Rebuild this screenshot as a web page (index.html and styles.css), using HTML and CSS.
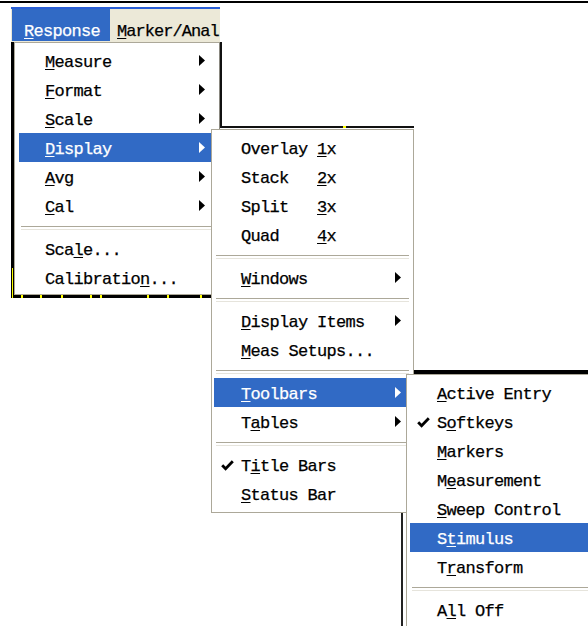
FILE: index.html
```html
<!DOCTYPE html>
<html>
<head>
<meta charset="utf-8">
<link rel="stylesheet" href="styles.css">
</head>
<body>
<div class="screen">
  <div class="topline"></div>
  <div class="titlestrip"></div>
  <div class="menubar">
    <div class="mb-item active"><span class="label"><u>R</u>esponse</span></div>
    <div class="mb-item tight"><span class="label"><u>M</u>arker/Anal</span></div>
  </div>

  <div class="bgwin w1">
    <i class="tick vt"></i>
    <i class="tick b1"></i><i class="tick b2"></i><i class="tick b3"></i><i class="tick b4"></i><i class="tick b5"></i><i class="tick b6"></i><i class="tick b7"></i><i class="tick b8"></i>
  </div>
  <div class="bgwin w2"><i class="tick c1"></i></div>
  <div class="bgwin w3"></div>
  <div class="bgwin w4"></div>

  <div class="menu m1">
    <div class="item"><span class="gut"></span><span class="label"><u>M</u>easure</span><svg class="arr" width="6" height="11" viewBox="0 0 6 11"><path d="M0 0L6 5.5L0 11Z"/></svg></div>
    <div class="item"><span class="gut"></span><span class="label"><u>F</u>ormat</span><svg class="arr" width="6" height="11" viewBox="0 0 6 11"><path d="M0 0L6 5.5L0 11Z"/></svg></div>
    <div class="item"><span class="gut"></span><span class="label"><u>S</u>cale</span><svg class="arr" width="6" height="11" viewBox="0 0 6 11"><path d="M0 0L6 5.5L0 11Z"/></svg></div>
    <div class="item hl"><span class="gut"></span><span class="label"><u>D</u>isplay</span><svg class="arr" width="6" height="11" viewBox="0 0 6 11"><path d="M0 0L6 5.5L0 11Z"/></svg></div>
    <div class="item"><span class="gut"></span><span class="label"><u>A</u>vg</span><svg class="arr" width="6" height="11" viewBox="0 0 6 11"><path d="M0 0L6 5.5L0 11Z"/></svg></div>
    <div class="item"><span class="gut"></span><span class="label"><u>C</u>al</span><svg class="arr" width="6" height="11" viewBox="0 0 6 11"><path d="M0 0L6 5.5L0 11Z"/></svg></div>
    <div class="sep"></div>
    <div class="item"><span class="gut"></span><span class="label">Sca<u>l</u>e...</span></div>
    <div class="item"><span class="gut"></span><span class="label">Calibratio<u>n</u>...</span></div>
  </div>

  <div class="menu m2">
    <div class="item"><span class="gut"></span><span class="label">Overlay <u>1</u>x</span></div>
    <div class="item"><span class="gut"></span><span class="label">Stack   <u>2</u>x</span></div>
    <div class="item"><span class="gut"></span><span class="label">Split   <u>3</u>x</span></div>
    <div class="item"><span class="gut"></span><span class="label">Quad    <u>4</u>x</span></div>
    <div class="sep"></div>
    <div class="item"><span class="gut"></span><span class="label"><u>W</u>indows</span><svg class="arr" width="6" height="11" viewBox="0 0 6 11"><path d="M0 0L6 5.5L0 11Z"/></svg></div>
    <div class="sep"></div>
    <div class="item"><span class="gut"></span><span class="label"><u>D</u>isplay Items</span><svg class="arr" width="6" height="11" viewBox="0 0 6 11"><path d="M0 0L6 5.5L0 11Z"/></svg></div>
    <div class="item"><span class="gut"></span><span class="label"><u>M</u>eas Setups...</span></div>
    <div class="sep"></div>
    <div class="item hl"><span class="gut"></span><span class="label"><u>T</u>oolbars</span><svg class="arr" width="6" height="11" viewBox="0 0 6 11"><path d="M0 0L6 5.5L0 11Z"/></svg></div>
    <div class="item"><span class="gut"></span><span class="label">T<u>a</u>bles</span><svg class="arr" width="6" height="11" viewBox="0 0 6 11"><path d="M0 0L6 5.5L0 11Z"/></svg></div>
    <div class="sep"></div>
    <div class="item"><span class="gut"><svg class="chk" width="13" height="11" viewBox="0 0 13 11"><path d="M1.2 5.2L4.6 8.8L11.8 1.2"/></svg></span><span class="label">T<u>i</u>tle Bars</span></div>
    <div class="item"><span class="gut"></span><span class="label"><u>S</u>tatus Bar</span></div>
  </div>

  <div class="menu m3">
    <div class="item"><span class="gut"></span><span class="label"><u>A</u>ctive Entry</span></div>
    <div class="item"><span class="gut"><svg class="chk" width="13" height="11" viewBox="0 0 13 11"><path d="M1.2 5.2L4.6 8.8L11.8 1.2"/></svg></span><span class="label">S<u>o</u>ftkeys</span></div>
    <div class="item"><span class="gut"></span><span class="label"><u>M</u>arkers</span></div>
    <div class="item"><span class="gut"></span><span class="label">M<u>e</u>asurement</span></div>
    <div class="item"><span class="gut"></span><span class="label"><u>S</u>weep Control</span></div>
    <div class="item hl"><span class="gut"></span><span class="label">S<u>t</u>imulus</span></div>
    <div class="item"><span class="gut"></span><span class="label">T<u>r</u>ansform</span></div>
    <div class="sep"></div>
    <div class="item"><span class="gut"></span><span class="label">A<u>l</u>l Off</span></div>
  </div>
</div>
</body>
</html>
```

FILE: styles.css
```css
* { box-sizing: border-box; }
html, body { margin: 0; padding: 0; background: #fff; }
body {
  font-family: "Liberation Mono", "DejaVu Sans Mono", monospace;
  font-size: 17px;
  font-weight: normal;
  letter-spacing: -0.7px;
  color: #000;
  -webkit-text-stroke: 0.25px currentColor;
}
u {
  text-decoration-thickness: 1px;
  text-underline-offset: 2px;
}
.screen {
  position: relative;
  width: 588px;
  height: 626px;
  overflow: hidden;
}
.topline {
  margin-top: 1px;
  height: 2px;
  background: #000;
}
.titlestrip {
  margin: 4px 0 0 11px;
  width: 209px;
  height: 2px;
  background: #2a5fd6;
}
.menubar {
  margin-left: 11px;
  width: 209px;
  height: 33px;
  background: #ece9d8;
  display: flex;
  padding-left: 1px;
  overflow: hidden;
  white-space: nowrap;
}
.mb-item {
  display: flex;
  align-items: center;
  height: 32px;
  padding: 8px 10px 0 12px;
  flex: none;
}
.mb-item.tight { padding-left: 7px; padding-right: 0; letter-spacing: -0.95px; }
.mb-item.active { background: #316ac5; color: #fff; }

/* background windows on the desktop */
.bgwin { position: absolute; }
.w1 {
  left: 11px; top: 42px; width: 200px; height: 256px;
  border-left: 3px solid #000; border-bottom: 3px solid #000;
}
.w2 {
  left: 220px; top: 42px; width: 194px; height: 86px;
  border-left: 2px solid #111; border-bottom: 2px solid #111;
}
.w3 {
  left: 413px; top: 370px; width: 175px; height: 4px;
  background: #000;
}
.w4 {
  left: 401px; top: 511px; width: 5px; height: 115px;
  border-left: 2px solid #222; border-top: 1px solid #222;
}
.tick { position: absolute; background: #ffff00; display: block; }
.w1 .tick { bottom: -3px; width: 2px; height: 3px; }
.w1 .vt { left: -2px; top: 226px; width: 1px; height: 30px; bottom: auto; }
.b1 { left: 7px; } .b2 { left: 26px; } .b3 { left: 47px; } .b4 { left: 76px; }
.b5 { left: 86px; } .b6 { left: 133px; } .b7 { left: 153px; } .b8 { left: 186px; }
.c1 { bottom: -2px; left: 121px; width: 3px; height: 2px; }

/* menus */
.menu {
  position: absolute;
  background: #fff;
  border: 1px solid #aca899;
  display: flex;
  flex-direction: column;
}
.m1 { left: 14px; top: 42px; width: 206px; height: 253px; padding: 3px 4px; --gut: 26px; border-right-color: #8a8880; }
.m2 { left: 211px; top: 129px; width: 203px; height: 384px; padding: 3px 2px; --gut: 27px; }
.m3 { left: 406px; top: 374px; width: 200px; height: 272px; padding: 3px 3px; --gut: 27px; }
.item {
  display: flex;
  align-items: center;
  height: 29px;
  flex: none;
  white-space: pre;
}
.item.hl { background: #316ac5; color: #fff; }
.gut {
  width: var(--gut);
  flex: none;
  display: flex;
  align-items: center;
  padding: 2px 0 0 7px;
}
.label { padding-top: 4px; }
.arr { margin-left: auto; margin-right: 10px; fill: currentColor; flex: none; }
.chk path { fill: none; stroke: currentColor; stroke-width: 2.8; }
.sep { height: 14px; padding-top: 6px; margin: 0 2px; flex: none; }
.sep::before {
  content: "";
  display: block;
  height: 2px;
  border-top: 1px solid #aca899;
  border-bottom: 1px solid #e6e4dc;
}
```
